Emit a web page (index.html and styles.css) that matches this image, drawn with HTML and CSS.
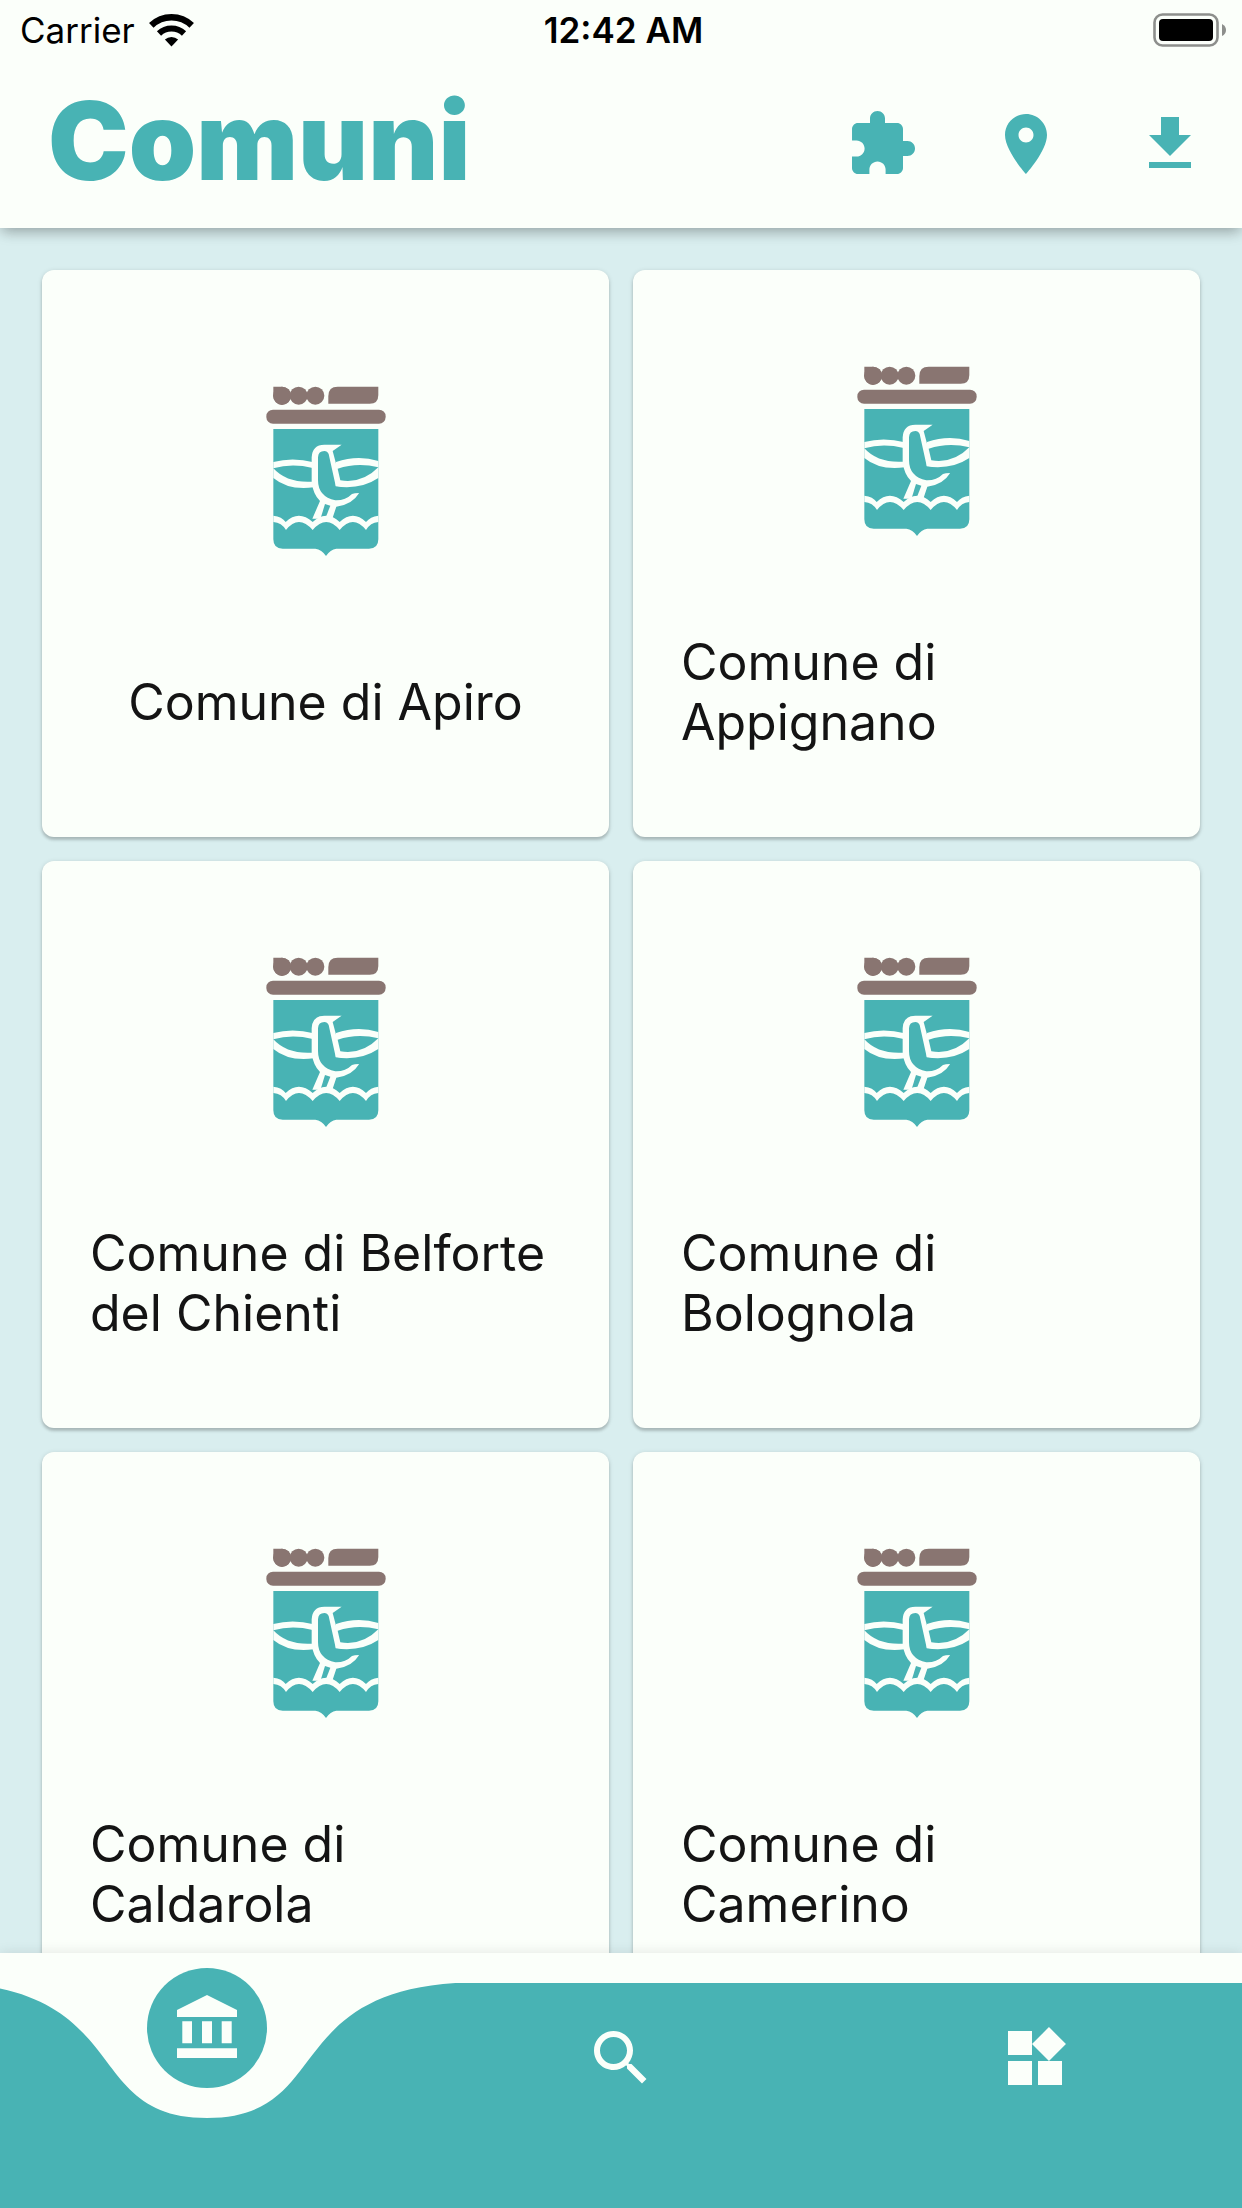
FILE: index.html
```html
<!DOCTYPE html>
<html lang="it">
<head>
<meta charset="utf-8">
<meta name="viewport" content="width=device-width, initial-scale=1">
<title>Comuni</title>
<link rel="stylesheet" href="styles.css">
</head>
<body>
<svg class="defs" aria-hidden="true">
  <symbol id="crest" viewBox="-61 15 576 576">
    <g class="crest-crown">
      <path d="M69 50H95A27 27 0 0 1 95 105A27 27 0 0 1 69 78Z"/>
      <circle cx="95" cy="77" r="27"/>
      <circle cx="145" cy="77" r="27"/>
      <circle cx="195" cy="77" r="27"/>
      <path d="M262 50H384V74Q384 101 358 101H234V78Q234 50 262 50Z"/>
      <rect x="48" y="119" width="358" height="42" rx="20"/>
    </g>
    <path class="crest-field" d="M69 177H384V508Q384 536 356 536H258Q240 538 227 558Q214 538 195 536H97Q69 536 69 508Z"/>
    <path class="crest-line" d="M69 276Q128 260 190 277V352Q115 362 69 324Z"/>
    <path class="crest-field" d="M69 295Q125 279 187 294V335Q110 340 69 295Z"/>
    <path class="crest-line" d="M184 262Q186 224 222 224H274L247 243L275 349L326 370Q305 405 258 410L246 446H186L209 393Q188 372 184 335Z"/>
    <path class="crest-field" d="M203 262Q204 243 222 243Q231 243 235 252L256 347Q300 354 340 342L326 369Q312 369 305 372Q285 392 255 391Q203 380 203 330Z"/>
    <path class="crest-line" d="M257 276Q322 254 384 273V324Q330 360 256 349Z"/>
    <path class="crest-field" d="M262 296Q322 276 384 292Q335 342 270 331Z"/>
    <path class="crest-field" d="M224 402L240 407L228 438L212 441Z"/>
    <path class="crest-line" d="M69 437Q95 440 106 456Q145 418 187 456Q228 418 268 456Q308 418 347 456Q360 440 384 437V456Q360 458 347 480Q308 432 268 480Q228 432 187 480Q145 432 107 480Q94 458 69 456Z"/>
  </symbol>
</svg>

<div class="app">
  <header class="top">
    <div class="status">
      <div class="status-left">
        <span>Carrier</span>
        <svg class="wifi" viewBox="0 0 45 33" aria-hidden="true">
          <path d="M2.3 11.4A29.2 29.2 0 0 1 42.7 11.4" fill="none" stroke="currentColor" stroke-width="6.5"/>
          <path d="M10 19.5A18 18 0 0 1 35 19.5" fill="none" stroke="currentColor" stroke-width="6"/>
          <path d="M22.5 32.5L15.9 25.6A9.5 9.5 0 0 1 29.1 25.6Z" fill="currentColor"/>
        </svg>
      </div>
      <span class="clock">12:42 AM</span>
      <svg class="battery" viewBox="0 0 75 36" aria-hidden="true">
        <rect x="2.5" y="2.5" width="63" height="31" rx="8" fill="none" stroke="#8d8f8c" stroke-width="2.6"/>
        <rect x="7" y="7" width="54" height="22" rx="4" fill="#000"/>
        <path d="M70 12Q74 14 74 18T70 24Z" fill="#8d8f8c"/>
      </svg>
    </div>
    <div class="bar">
      <h1>Comuni</h1>
      <div class="actions">
        <button type="button" aria-label="Estensioni"><svg class="icon" viewBox="0 0 24 24"><path d="M20.5 11H19V7c0-1.100-.9-2-2-2h-4V3.500C13 2.120 11.880 1 10.500 1S8 2.120 8 3.500V5H4c-1.100 0-1.990.9-1.990 2v3.800H3.500c1.490 0 2.700 1.210 2.700 2.700s-1.210 2.700-2.700 2.700H2V20c0 1.100.9 2 2 2h3.800v-1.500c0-1.490 1.210-2.700 2.700-2.700s2.700 1.210 2.700 2.700V22H17c1.100 0 2-.9 2-2v-4h1.500c1.380 0 2.500-1.120 2.500-2.500S21.880 11 20.500 11z"/></svg></button>
        <button type="button" aria-label="Mappa"><svg class="icon" viewBox="0 0 24 24"><path d="M12 2C8.130 2 5 5.130 5 9c0 5.250 7 13 7 13s7-7.750 7-13c0-3.870-3.130-7-7-7zm0 9.500c-1.380 0-2.500-1.120-2.500-2.500s1.120-2.500 2.500-2.500 2.500 1.120 2.500 2.500-1.120 2.500-2.500 2.500z"/></svg></button>
        <button type="button" aria-label="Scarica"><svg class="icon" viewBox="0 0 24 24"><path d="M19 9h-4V3H9v6H5l7 7 7-7zM5 18v2h14v-2H5z"/></svg></button>
      </div>
    </div>
  </header>

  <main class="grid">
    <a class="card" href="#apiro"><svg class="crest" aria-hidden="true"><use href="#crest"/></svg><span class="name">Comune di Apiro</span></a>
    <a class="card" href="#appignano"><svg class="crest" aria-hidden="true"><use href="#crest"/></svg><span class="name">Comune di Appignano</span></a>
    <a class="card" href="#belforte"><svg class="crest" aria-hidden="true"><use href="#crest"/></svg><span class="name">Comune di Belforte del Chienti</span></a>
    <a class="card" href="#bolognola"><svg class="crest" aria-hidden="true"><use href="#crest"/></svg><span class="name">Comune di Bolognola</span></a>
    <a class="card" href="#caldarola"><svg class="crest" aria-hidden="true"><use href="#crest"/></svg><span class="name">Comune di Caldarola</span></a>
    <a class="card" href="#camerino"><svg class="crest" aria-hidden="true"><use href="#crest"/></svg><span class="name">Comune di Camerino</span></a>
  </main>

  <nav class="tabs">
    <svg class="wave" viewBox="0 0 1242 225" preserveAspectRatio="none" aria-hidden="true"><path d="M-41.400 0C132.500 11.250 82.800 135 207 135C331.200 135 281.500 11.250 455.400 0H1242V225H-42Z"/></svg>
    <a class="tab active" href="#comuni" aria-label="Comuni" aria-current="page"><span class="disc"><svg class="icon" viewBox="0 0 72 72"><path d="M36 3L66 18V25H6V18ZM11.300 29.300H21V51.300H11.300ZM31 29.300H41V51.300H31ZM50.700 29.300H60.700V51.300H50.700ZM6 56.300H66V66H6Z"/></svg></span></a>
    <a class="tab" href="#cerca" aria-label="Cerca"><svg class="icon" viewBox="0 0 24 24"><path d="M15.500 14h-.79l-.28-.27C15.410 12.590 16 11.110 16 9.500 16 5.910 13.090 3 9.500 3S3 5.910 3 9.500 5.910 16 9.500 16c1.610 0 3.090-.59 4.230-1.570l.27.28v.79l5 4.990L20.490 19l-4.990-5zm-6 0C7.010 14 5 11.990 5 9.500S7.010 5 9.500 5 14 7.010 14 9.500 11.990 14 9.500 14z"/></svg></a>
    <a class="tab" href="#altro" aria-label="Altro"><svg class="icon" viewBox="0 0 24 24"><path d="M13 13v8h8v-8h-8zM3 21h8v-8H3v8zM3 3v8h8V3H3zm13.660-1.310L11 7.340 16.660 13l5.660-5.660-5.660-5.650z"/></svg></a>
  </nav>
</div>
</body>
</html>
```
FILE: styles.css
```css
:root {
  --paper: #fbfffa;
  --teal: #48b3b4;
  --mist: #d9eeef;
  --taupe: #897571;
}

* {
  box-sizing: border-box;
}

body {
  margin: 0;
  background: var(--mist);
  font-family: Inter, "Liberation Sans", sans-serif;
}

.defs {
  position: absolute;
  width: 0;
  height: 0;
}

.app {
  display: flex;
  flex-direction: column;
  height: 100vh;
}

/* Header */
.top {
  position: relative;
  z-index: 1;
  background: var(--paper);
  box-shadow: 0 6px 12px -3px rgba(0, 0, 0, 0.2), 0 3px 15px rgba(0, 0, 0, 0.16);
}

.status {
  display: grid;
  grid-template-columns: 1fr auto 1fr;
  align-items: center;
  height: 60px;
  padding: 0 15px 0 20px;
  color: #000;
  font-size: 35px;
  line-height: 42px;
}

.status-left {
  display: flex;
  align-items: center;
  gap: 14px;
}

.wifi {
  width: 45px;
  height: 33px;
}

.clock {
  font-weight: 600;
}

.battery {
  justify-self: end;
  width: 75px;
  height: 36px;
}

.bar {
  display: flex;
  align-items: center;
  justify-content: space-between;
  height: 168px;
  padding-left: 48px;
}

h1 {
  margin: 0;
  padding-bottom: 6px;
  color: var(--teal);
  font-size: 108px;
  font-weight: 900;
  line-height: 120px;
}

.actions {
  display: flex;
}

.actions button {
  display: flex;
  align-items: center;
  justify-content: center;
  width: 144px;
  height: 144px;
  padding: 0;
  border: 0;
  background: none;
  color: var(--teal);
}

.icon {
  width: 72px;
  height: 72px;
  fill: currentColor;
}

/* Cards */
.grid {
  display: grid;
  flex: 1;
  grid-template-columns: 1fr 1fr;
  align-content: start;
  gap: 24px;
  min-height: 0;
  padding: 42px;
  overflow: hidden;
}

.card {
  display: flex;
  flex-direction: column;
  align-items: center;
  justify-content: space-evenly;
  aspect-ratio: 1;
  padding: 0 48px;
  border-radius: 12px;
  background: var(--paper);
  box-shadow: 0 3px 3px rgba(0, 0, 0, 0.16), 0 1px 5px rgba(0, 0, 0, 0.14);
  color: #141414;
  font-size: 50px;
  line-height: 60px;
  text-decoration: none;
}

.crest {
  width: 192px;
  height: 192px;
}

.crest-crown {
  fill: var(--taupe);
}

.crest-field {
  fill: var(--teal);
}

.crest-line {
  fill: var(--paper);
}

/* Bottom navigation */
.tabs {
  position: relative;
  z-index: 1;
  display: grid;
  grid-template-columns: 1fr 1fr 1fr;
  height: 255px;
  background: var(--paper);
  box-shadow: 0 0 12px rgba(0, 0, 0, 0.1);
}

.wave {
  position: absolute;
  bottom: 0;
  left: 0;
  width: 100%;
  height: 225px;
  fill: var(--teal);
}

.tab {
  position: relative;
  display: flex;
  align-items: center;
  justify-content: center;
  height: 150px;
  margin-top: 30px;
  color: var(--paper);
}

.tab.active {
  margin-top: 0;
}

.disc {
  display: flex;
  align-items: center;
  justify-content: center;
  width: 120px;
  height: 120px;
  border-radius: 50%;
  background: var(--teal);
}
```
